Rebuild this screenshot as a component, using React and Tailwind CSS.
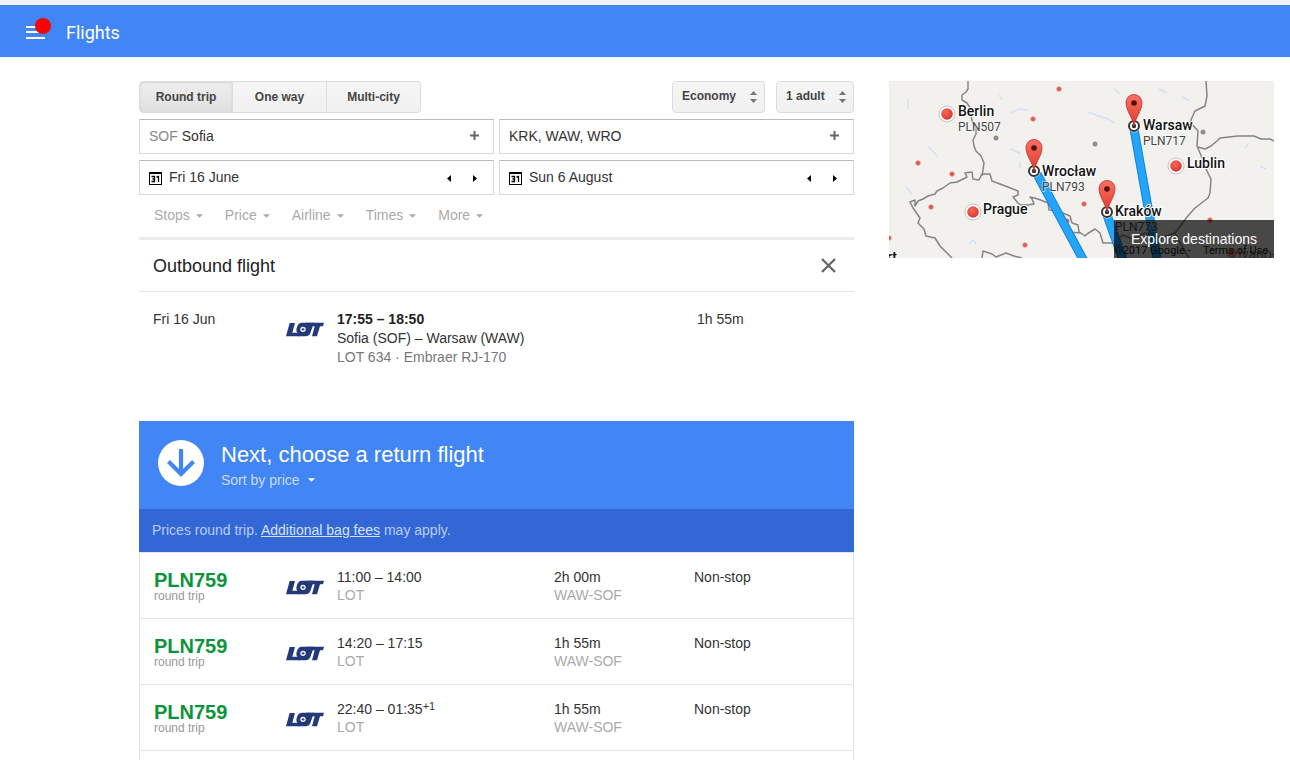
import React from "react";

const SANS = "font-['Liberation_Sans',Arial,sans-serif]";

function Caret({ className }) {
  return (
    <svg viewBox="0 0 8 4" className={className} fill="currentColor" aria-hidden="true">
      <path d="M0 0h8L4 4z" />
    </svg>
  );
}

function LotLogo() {
  return (
    <svg viewBox="0 0 114 45" className="block h-[15px] w-[38px]" role="img" aria-label="LOT">
      <g fill="#24397a">
        <path d="M11 3H27L19 32H40V43H0Z" />
        <path d="M48 2H84L73 33Q69 43 58 43H36V34Q29 30 32 18Q36 2 48 2Z" />
        <path d="M60 2H114L111 13H102L93 43H78L86 13H60Z" />
      </g>
      <circle cx="51" cy="22" r="8" fill="#fff" />
      <path d="M51 17.500v9M46.500 22h9" stroke="#24397a" strokeWidth="3" />
    </svg>
  );
}

function Header() {
  return (
    <header className="flex h-[57px] items-center border-t-[5px] border-[#f1f1f1] bg-[#4285f4] pt-0.5 pl-[26px] text-white">
      <button type="button" aria-label="Menu" className="relative h-[14px] w-[19px]">
        <svg viewBox="0 0 19 14" className="block h-[14px] w-[19px]" fill="#fff" aria-hidden="true">
          <path d="M0 1h19v2H0zM0 6h19v2H0zM0 12h19v2H0z" />
        </svg>
        <span className="absolute -top-[7px] left-[9px] size-4 rounded-full bg-[#ff0000]" />
      </button>
      <h1 className="ml-[21px] pt-0.5 font-[Roboto,sans-serif] text-lg leading-6">Flights</h1>
    </header>
  );
}

function TripTypes() {
  const base =
    "h-8 w-[94px] border-y border-r border-[#dcdcdc] text-xs font-bold text-[#444] first:rounded-l-sm first:border-l last:rounded-r-sm ";
  return (
    <div className="flex">
      <button type="button" aria-pressed="true" className={base + "border-[#ccc] bg-linear-to-b from-[#eee] to-[#e0e0e0] shadow-[inset_0_1px_2px_rgba(0,0,0,0.1)]"}>
        Round trip
      </button>
      <button type="button" aria-pressed="false" className={base + "bg-linear-to-b from-[#f5f5f5] to-[#f1f1f1]"}>
        One way
      </button>
      <button type="button" aria-pressed="false" className={base + "bg-linear-to-b from-[#f5f5f5] to-[#f1f1f1]"}>
        Multi-city
      </button>
    </div>
  );
}

function Select({ label, options, width }) {
  return (
    <div className={"relative " + width}>
      <select
        aria-label={label}
        className="h-8 w-full appearance-none rounded-sm border border-[#dcdcdc] bg-linear-to-b from-[#f5f5f5] to-[#f1f1f1] pb-0.5 pl-[9px] text-xs font-bold text-[#444]"
      >
        {options.map((o) => (
          <option key={o}>{o}</option>
        ))}
      </select>
      <svg viewBox="0 0 7 12" className="pointer-events-none absolute top-2.5 right-2 h-3 w-[7px]" fill="#777" aria-hidden="true">
        <path d="M3.500 0L7 4H0zM0 8h7L3.500 12z" />
      </svg>
    </div>
  );
}

const FIELD = "flex h-[35px] items-center border border-[#d9d9d9] border-t-[#b9b9b9] bg-white pl-[9px] text-sm text-[#333]";

function PlaceField({ label, code, value }) {
  return (
    <div className={FIELD + " pr-3.5"}>
      {code && <span className="mr-1 pb-0.5 text-[#888]">{code}</span>}
      <input aria-label={label} defaultValue={value} className="h-full min-w-0 flex-1 bg-transparent pb-0.5 outline-none" />
      <button type="button" aria-label="Add airport">
        <svg viewBox="0 0 9 9" className="mb-0.5 block size-[9px]" fill="#666" aria-hidden="true">
          <path d="M3.500 0h2v3.500H9v2H5.500V9h-2V5.500H0v-2h3.500z" />
        </svg>
      </button>
    </div>
  );
}

function DateField({ label, value }) {
  return (
    <div className={FIELD + " pr-4"}>
      <svg viewBox="0 0 13 13" className="mt-0.5 size-[13px] shrink-0" aria-hidden="true">
        <path d="M0 0h13v13H0zM1 2v10h11V2z" fill="#000" fillRule="evenodd" />
        <path d="M2.500 4.500H5.500V9.500H2.500M3.500 7H5.500M7.500 5.200L9.500 4.500V10" fill="none" stroke="#000" strokeWidth="1.300" />
      </svg>
      <input aria-label={label} defaultValue={value} className="ml-[7px] h-full min-w-0 flex-1 bg-transparent pb-0.5 outline-none" />
      <div className="flex gap-[22px] pt-0.5 text-black">
        <button type="button" aria-label="Previous day">
          <svg viewBox="0 0 4 7" className="block h-[7px] w-1" fill="currentColor"><path d="M4 0v7L0 3.500z" /></svg>
        </button>
        <button type="button" aria-label="Next day">
          <svg viewBox="0 0 4 7" className="block h-[7px] w-1" fill="currentColor"><path d="M0 0v7l4-3.500z" /></svg>
        </button>
      </div>
    </div>
  );
}

function SearchForm() {
  return (
    <form onSubmit={(e) => e.preventDefault()}>
      <div className="flex justify-between">
        <TripTypes />
        <div className="flex gap-[11px]">
          <Select label="Cabin class" options={["Economy", "Business", "First"]} width="w-[93px]" />
          <Select label="Passengers" options={["1 adult", "2 adults"]} width="w-[78px]" />
        </div>
      </div>
      <div className="mt-1.5 grid grid-cols-2 gap-x-[5px] gap-y-1.5">
        <PlaceField label="From" code="SOF" value="Sofia" />
        <PlaceField label="To" value="KRK, WAW, WRO" />
        <DateField label="Departure date" value="Fri 16 June" />
        <DateField label="Return date" value="Sun 6 August" />
      </div>
      <div className="flex h-[42px] items-center gap-[22px] pb-0.5 pl-[15px] text-sm text-[#aaa]">
        {["Stops", "Price", "Airline", "Times", "More"].map((f) => (
          <button key={f} type="button" className="flex items-center gap-1.5">
            {f}
            <Caret className="mt-0.5 h-1 w-[7px]" />
          </button>
        ))}
      </div>
    </form>
  );
}

function Outbound() {
  return (
    <section className="border-t-[3px] border-[#ebebeb]">
      <div className="flex h-[52px] items-center justify-between border-b border-[#e5e5e5] pr-[18px] pl-3.5">
        <h2 className="text-lg leading-6 text-[#222]">Outbound flight</h2>
        <button type="button" aria-label="Close">
          <svg viewBox="0 0 15 15" className="block size-[15px]" fill="none" stroke="#666" strokeWidth="2.300" aria-hidden="true">
            <path d="M1 1l13 13M14 1L1 14" />
          </svg>
        </button>
      </div>
      <div className="grid h-[129px] grid-cols-[133px_51px_360px_1fr] items-start pt-[18px] pl-3.5 text-sm leading-[19px] text-[#333]">
        <span>Fri 16 Jun</span>
        <div className="pt-3"><LotLogo /></div>
        <div>
          <p className="font-bold text-[#222]">17:55 – 18:50</p>
          <p>Sofia (SOF) – Warsaw (WAW)</p>
          <p className="text-[#777]">LOT 634 · Embraer RJ-170</p>
        </div>
        <span>1h 55m</span>
      </div>
    </section>
  );
}

const FLIGHTS = [
  { time: "11:00 – 14:00", duration: "2h 00m" },
  { time: "14:20 – 17:15", duration: "1h 55m" },
  { time: "22:40 – 01:35", plus: "+1", duration: "1h 55m" },
];

function ReturnFlights() {
  return (
    <section className="flex flex-1 flex-col">
      <div className="flex h-[88px] items-start bg-[#4285f4] pt-[19px] pl-[19px]">
        <svg viewBox="0 0 46 46" className="size-[46px]" aria-hidden="true">
          <circle cx="23" cy="23" r="23" fill="#fff" />
          <path d="M23 9v25M10.500 21.500L23 34l12.500-12.500" fill="none" stroke="#4285f4" strokeWidth="4.200" />
        </svg>
        <div className="ml-[17px]">
          <h2 className="text-[22px] leading-[30px] text-white">Next, choose a return flight</h2>
          <button type="button" className="flex items-center gap-2 text-sm leading-5 text-[#c9dcfc]">
            Sort by price
            <Caret className="h-1 w-[7px] text-white" />
          </button>
        </div>
      </div>
      <p className="h-[43px] bg-[#3367d6] pl-[13px] text-sm leading-[43px] text-[#b8cdf5]">
        Prices round trip.{" "}
        <a href="#fees" className="text-[#d6e3fb] underline">Additional bag fees</a> may apply.
      </p>
      <div className="flex-1 border border-b-0 border-[#e5e5e5]">
        <table className="w-full table-fixed border-separate border-spacing-0 text-left text-sm leading-[18px] text-[#333]">
          <colgroup>
            <col className="w-[146px]" />
            <col className="w-[51px]" />
            <col className="w-[217px]" />
            <col className="w-[140px]" />
            <col />
          </colgroup>
          <tbody>
            {FLIGHTS.map((f) => (
              <tr key={f.time} className="h-[66px] align-top *:border-b *:border-[#e5e5e5]">
                <td className="pt-[17px] pl-3.5">
                  <div className="text-xl leading-5 font-bold text-[#0c943a]">PLN759</div>
                  <div className="text-xs leading-3 text-[#999]">round trip</div>
                </td>
                <td className="pt-[27px]"><LotLogo /></td>
                <td className="pt-[15px]">
                  <div className="flex">
                    {f.time}
                    {f.plus && <span className="text-[11px] leading-3">{f.plus}</span>}
                  </div>
                  <div className="text-[#aaa]">LOT</div>
                </td>
                <td className="pt-[15px]">
                  <div>{f.duration}</div>
                  <div className="text-[#aaa]">WAW-SOF</div>
                </td>
                <td className="pt-[15px]">Non-stop</td>
              </tr>
            ))}
          </tbody>
        </table>
      </div>
    </section>
  );
}

const BORDERS = [
  "M79 0L79 8L77 11L73 14L73 19L78 22L81 27L82 34L83 40L87 47L87 53L84 59L85 65L87 70L92 75L95 82L94 89L93 95",
  "M63 177L51 165L46 157L37 155L35 148L29 142L31 137L24 127L21 121L26 119L26 125L29 120L34 118L39 115L46 113L48 110L54 107L61 102L68 101L74 98L78 96L76 92L83 91L84 98L90 99L93 93L101 93L103 100L111 103L119 106L129 110L129 114L124 116L129 122L132 124L138 124L145 123L143 118L141 116L149 118L159 122L160 129L169 130L181 135L183 142L189 144L190 151L196 155L198 153L206 148L211 152L214 162L224 162L234 154L244 158L256 152L272 157L286 152",
  "M93 177L94 170L103 173L107 176L117 172L125 175L133 177M180 151L192 152",
  "M317 0L318 15L316 25L306 30L301 41L309 50L308 65L314 79L318 90L322 98L321 112L319 117L306 127L298 136L286 152L290 160L300 177",
  "M309 66L316 68L322 65L328 60L331 57L349 55L365 55L372 58L381 58L385 60",
];

const RED_DOTS = [[170, 8], [144, 38], [29, 82], [63, 93], [42, 126], [136, 164], [195, 123], [178, 140], [0, 157], [321, 139]];
const GREY_DOTS = [[107, 57], [206, 63], [314, 51]];
const CITIES = [[58, 33], [84, 131], [287, 85]];
const PINS = [[145, 90], [245, 45], [218, 131]];
const LABELS = [
  ["Berlin", 69, 35, "PLN507"],
  ["Wrocław", 153, 95, "PLN793"],
  ["Prague", 94, 133],
  ["Warsaw", 254, 49, "PLN717"],
  ["Lublin", 298, 87],
  ["Kraków", 226, 135, "PLN773"],
];

function DestinationMap() {
  return (
    <div className="relative">
      <svg viewBox="0 0 385 177" className="block h-auto w-full font-[Roboto,sans-serif]" role="img" aria-label="Map of destinations in Central Europe">
        <defs>
          <radialGradient id="city" cx="0.4" cy="0.35" r="0.7">
            <stop offset="0" stopColor="#f4695c" />
            <stop offset="1" stopColor="#d9342b" />
          </radialGradient>
          <linearGradient id="pin" x1="0" y1="0" x2="0" y2="1">
            <stop offset="0" stopColor="#fb7064" />
            <stop offset="1" stopColor="#e0382d" />
          </linearGradient>
        </defs>
        <rect width="385" height="177" fill="#f2f1ee" />
        <path d="M19 18v10M40 66l8 9M121 68l10 4M122 32l8-4 9 1M131 80v7M80 163l4-4 3 4M17 106l6 7M110 14l3 5M199 31l8 3 12 4 6 4M293 16l8 4M270 8l8 4M356 67l4-5M371 85l6 3M225 8l6 5M265 38l5 3" fill="none" stroke="#d3e1f3" strokeWidth="1.400" />
        {BORDERS.map((d) => (
          <path key={d} d={d} fill="none" stroke="#858585" strokeWidth="1.500" strokeLinejoin="round" />
        ))}
        {RED_DOTS.map(([x, y]) => (
          <circle key={x} cx={x} cy={y} r="2.500" fill="#e2574f" stroke="#f3c1bd" strokeWidth="0.600" />
        ))}
        {GREY_DOTS.map(([x, y]) => (
          <circle key={x} cx={x} cy={y} r="2.500" fill="#8e8e8b" />
        ))}
        {["M148 93L196 182", "M245 48L268 177", "M218 134L235 182"].map((d) => (
          <g key={d} fill="none">
            <path d={d} stroke="#1682d8" strokeWidth="9" />
            <path d={d} stroke="#22a5fb" strokeWidth="7" />
          </g>
        ))}
        {CITIES.map(([x, y]) => (
          <g key={x}>
            <circle cx={x} cy={y} r="8" fill="#fff" stroke="#b5b5b5" strokeWidth="0.800" />
            <circle cx={x} cy={y} r="5.800" fill="url(#city)" />
          </g>
        ))}
        {PINS.map(([x, y]) => (
          <g key={x}>
            <circle cx={x} cy={y} r="6.500" fill="#fff" />
            <circle cx={x} cy={y} r="5" fill="#fff" stroke="#333" strokeWidth="2" />
            <circle cx={x} cy={y} r="2.200" fill="#333" />
            <path
              transform={`translate(${x} ${y})`}
              d="M0 0C-1-8-8-15-8-23.500A8 8 0 0 1 8-23.500C8-15 1-8 0 0Z"
              fill="url(#pin)"
              stroke="#b5322a"
              strokeWidth="0.800"
            />
            <circle cx={x} cy={y - 23} r="2.800" fill="#54100c" />
          </g>
        ))}
        {LABELS.map(([name, x, y, price]) => (
          <g key={name} stroke="#fff" strokeWidth="2" paintOrder="stroke" strokeLinejoin="round">
            {price && <text x={x} y={y + 15} fontSize="12" fill="#444" strokeOpacity="0.5">{price}</text>}
            <text x={x} y={y} fontSize="14" fontWeight="500" fill="#111">{name}</text>
          </g>
        ))}
        <circle cx="343" cy="172" r="5" fill="#e2574f" fillOpacity="0.6" />
        <text x="349" y="178" fontSize="14" fill="#777">Ivano-</text>
        <text x="-2" y="181" fontSize="14" fontWeight="500" fill="#111">rt</text>
        <text x="225" y="173" fontSize="11" fill="#222">©2017 Google -</text>
        <text x="314" y="173" fontSize="11" fill="#222">Terms of Use</text>
      </svg>
      <a href="#explore" className="absolute right-0 bottom-0 flex h-[38px] w-40 items-center justify-center bg-black/70 text-sm text-white">
        Explore destinations
      </a>
    </div>
  );
}

export default function App() {
  return (
    <div className={"flex min-h-screen flex-col bg-white " + SANS}>
      <Header />
      <div className="flex flex-1 gap-[35px] pt-6 pr-4 pl-[139px]">
        <main className="flex min-w-0 flex-1 flex-col">
          <SearchForm />
          <Outbound />
          <ReturnFlights />
        </main>
        <aside className="w-[385px] shrink-0">
          <DestinationMap />
        </aside>
      </div>
    </div>
  );
}
